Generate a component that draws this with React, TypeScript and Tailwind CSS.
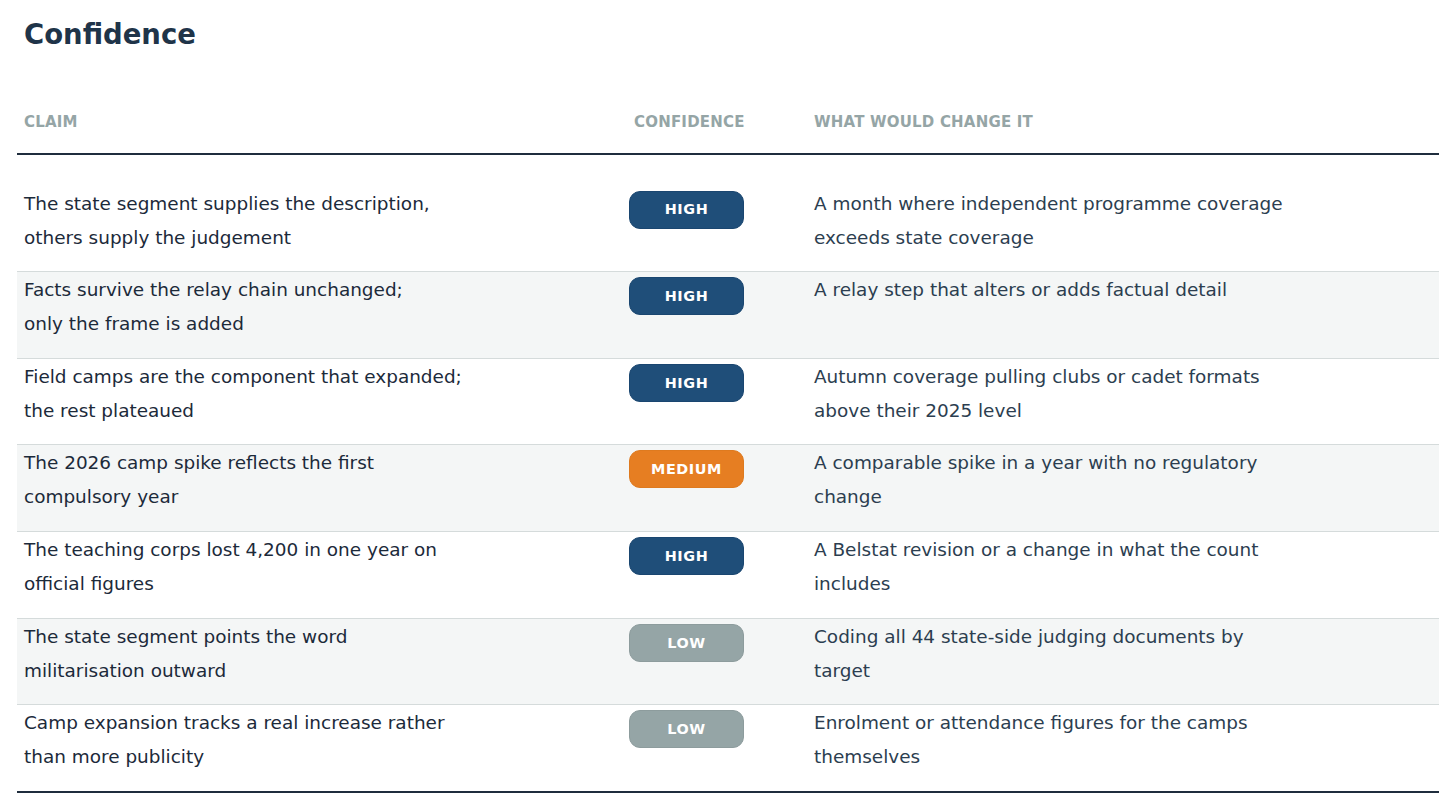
type Level = "HIGH" | "MEDIUM" | "LOW";

interface Row {
  claim: string[];
  level: Level;
  change: string[];
}

// lines are broken where the source table breaks them
const rows: Row[] = [
  {
    claim: ["The state segment supplies the description,", "others supply the judgement"],
    level: "HIGH",
    change: ["A month where independent programme coverage", "exceeds state coverage"],
  },
  {
    claim: ["Facts survive the relay chain unchanged;", "only the frame is added"],
    level: "HIGH",
    change: ["A relay step that alters or adds factual detail"],
  },
  {
    claim: ["Field camps are the component that expanded;", "the rest plateaued"],
    level: "HIGH",
    change: ["Autumn coverage pulling clubs or cadet formats", "above their 2025 level"],
  },
  {
    claim: ["The 2026 camp spike reflects the first", "compulsory year"],
    level: "MEDIUM",
    change: ["A comparable spike in a year with no regulatory", "change"],
  },
  {
    claim: ["The teaching corps lost 4,200 in one year on", "official figures"],
    level: "HIGH",
    change: ["A Belstat revision or a change in what the count", "includes"],
  },
  {
    claim: ["The state segment points the word", "militarisation outward"],
    level: "LOW",
    change: ["Coding all 44 state-side judging documents by", "target"],
  },
  {
    claim: ["Camp expansion tracks a real increase rather", "than more publicity"],
    level: "LOW",
    change: ["Enrolment or attendance figures for the camps", "themselves"],
  },
];

const badgeStyles: Record<Level, string> = {
  HIGH: "bg-[#1f4e79] border-[#1a4670]",
  MEDIUM: "bg-[#e67e22] border-[#de7a1f]",
  LOW: "bg-[#95a5a6] border-[#8d9c9d]",
};

const Badge = ({ level }: { level: Level }) => (
  <span
    className={`ml-[2px] mt-[4px] flex h-[38px] w-[115px] items-center justify-center rounded-[11px] border text-[14.4px] font-bold leading-none tracking-[0.04em] text-white ${badgeStyles[level]}`}
  >
    {level}
  </span>
);

const Lines = ({ lines, className }: { lines: string[]; className: string }) => (
  <p className={`min-h-[68px] whitespace-nowrap ${className}`}>
    {lines.map((l, i) => (
      <span key={i} className="block">
        {l}
      </span>
    ))}
  </p>
);

export default function App() {
  return (
    <div
      className="min-h-screen bg-white px-[17px] pt-[17px]"
      style={{ fontFamily: '"DejaVu Sans", Verdana, sans-serif' }}
    >
      <h2 className="pl-[7px] text-[27.5px] font-bold leading-[34px] text-[#1f3449]">
        Confidence
      </h2>

      <div className="w-[1422px]">
        {/* header */}
        <div className="grid grid-cols-[610px_180px_1fr] border-b-2 border-[#1f2d3d] pb-[21px] pt-[61px] text-[15px] font-bold uppercase leading-[20px] tracking-[0.2px] text-[#95a5a6]">
          <div className="pl-[7px]">Claim</div>
          <div className="pl-[7px]">Confidence</div>
          <div className="pl-[7px]">What would change it</div>
        </div>

        {rows.map((row, i) => (
          <div
            key={i}
            className={`grid grid-cols-[610px_180px_1fr] pb-[16.67px] text-[18.45px] leading-[34px] ${
              i === 0 ? "pt-[31.5px]" : "pt-px"
            } ${i % 2 === 1 ? "bg-[#f4f6f6]" : "bg-white"} ${
              i === rows.length - 1
                ? "border-b-2 border-[#1f2d3d]"
                : "border-b border-[#d5dbdb]"
            }`}
          >
            <div className="pl-[7px]">
              <Lines lines={row.claim} className="text-[#1c2a3a]" />
            </div>
            <div className="flex items-start">
              <Badge level={row.level} />
            </div>
            <div className="pl-[7px]">
              <Lines lines={row.change} className="text-[#2c3e50]" />
            </div>
          </div>
        ))}
      </div>
    </div>
  );
}
